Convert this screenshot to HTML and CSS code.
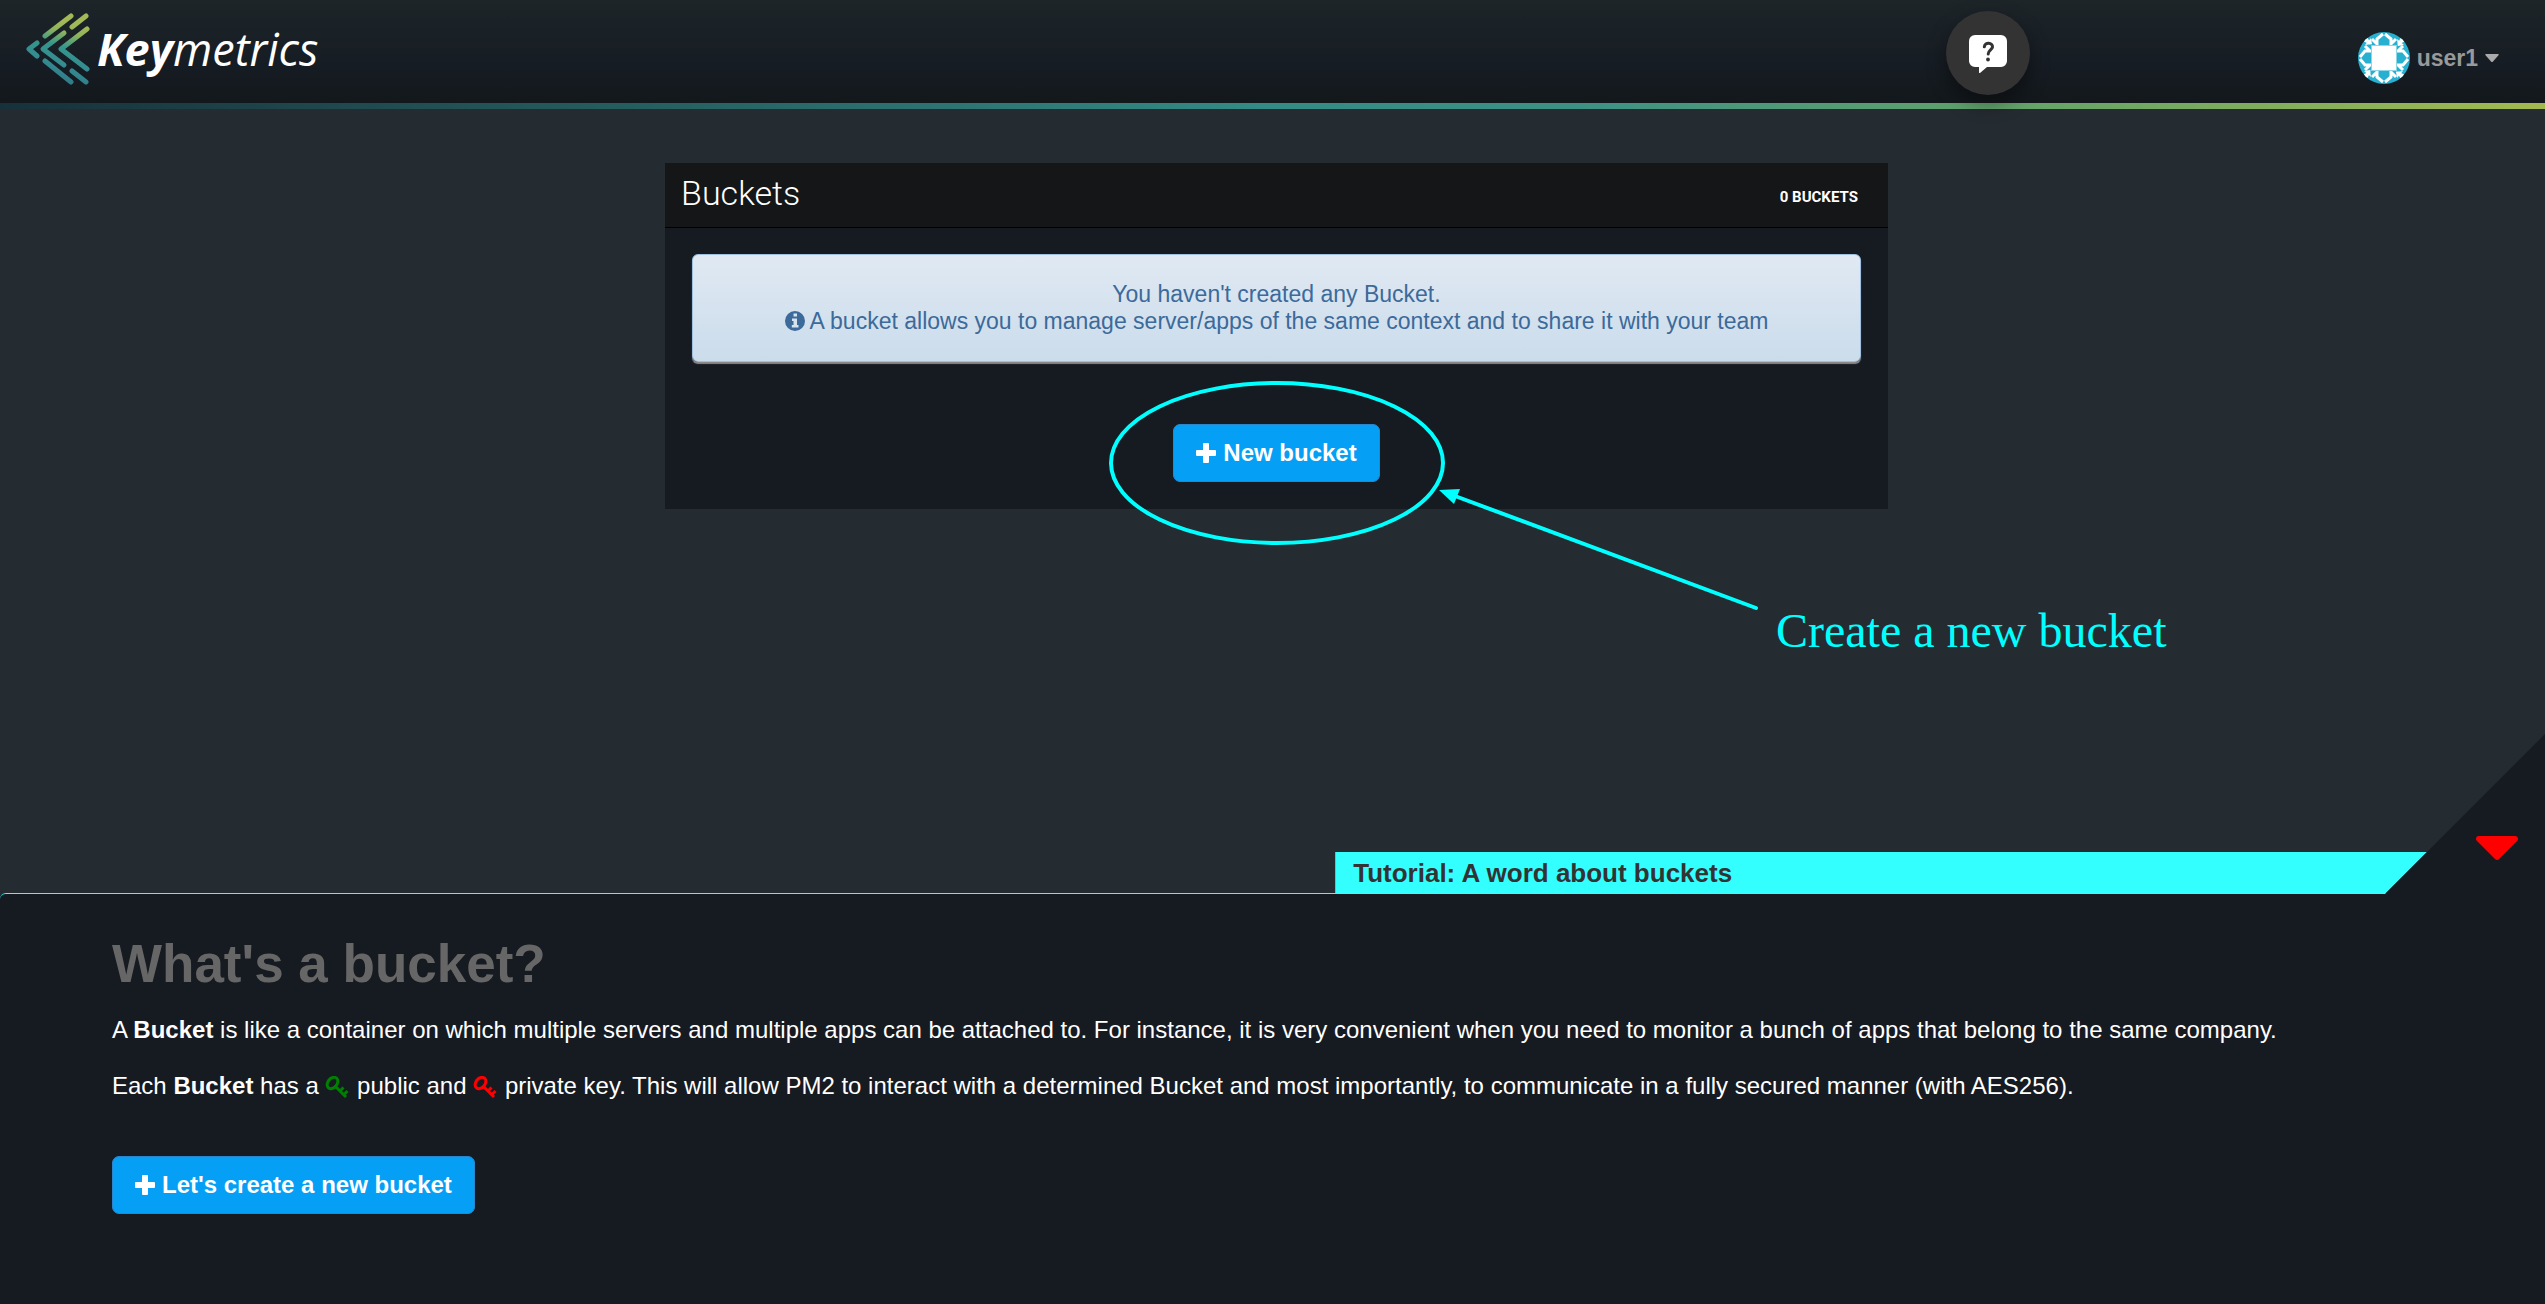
FILE: index.html
```html
<!DOCTYPE html>
<html lang="en">
<head>
  <meta charset="utf-8">
  <meta name="viewport" content="width=device-width, initial-scale=1">
  <title>Keymetrics - Buckets</title>
  <link rel="stylesheet" href="styles.css">
</head>
<body>
  <header class="topbar">
    <a class="brand" href="#">
      <svg class="brand-mark" viewBox="0 0 64 72" width="64" height="72" aria-hidden="true">
        <defs>
          <linearGradient id="mark" gradientUnits="userSpaceOnUse" x1="44" y1="0" x2="24" y2="72">
            <stop offset="0.12" stop-color="#a3b957"/>
            <stop offset="0.26" stop-color="#8fb45c"/>
            <stop offset="0.46" stop-color="#35968c"/>
            <stop offset="0.7" stop-color="#348b91"/>
            <stop offset="1" stop-color="#2f7484"/>
          </linearGradient>
        </defs>
        <g fill="none" stroke="url(#mark)" stroke-width="5" stroke-linecap="round" stroke-linejoin="round">
          <path d="M45 3 19 23"/>
          <path d="M60 3 46 14"/>
          <path d="M61 16 35 36 61 56"/>
          <path d="M38 20 17 36 38 52"/>
          <path d="M11 30 3 36 11 43"/>
          <path d="M19 48 45 69"/>
          <path d="M46 58 60 69"/>
        </g>
      </svg>
      <span class="brand-name"><b>Key</b>metrics</span>
    </a>
    <button class="help" type="button" aria-label="Help">
      <svg viewBox="0 0 38 38" width="38" height="38" aria-hidden="true">
        <path fill="#fff" d="M6 0h26a6 6 0 0 1 6 6v20a6 6 0 0 1-6 6H18l-7 6q-1 .5-1-1v-5H6a6 6 0 0 1-6-6V6a6 6 0 0 1 6-6z"/>
        <path fill="none" stroke="#333" stroke-width="3" stroke-linecap="round" d="M15.300 11.800c.4-5 8.700-4.300 8.200.2-.3 2.800-4.300 3.200-4.300 7"/>
        <circle cx="19" cy="24.500" r="1.900" fill="#333"/>
      </svg>
    </button>
    <button class="user-menu" type="button">
      <svg class="avatar" viewBox="0 0 52 52" width="52" height="52" aria-hidden="true">
        <clipPath id="round"><circle cx="26" cy="26" r="26"/></clipPath>
        <g clip-path="url(#round)">
          <path fill="#27b0cf" d="M0 0h52v52H0z"/>
          <g id="side">
            <path fill="#fff" d="M9 5l5 8-7-5zM45 7l-6 6 4-8zM14 12L7 13 13 6z"/>
            <path fill="none" stroke="#fff" stroke-width="3" d="M14 7l5 5V7l6-5M38 7l-5 5V7l-6-5"/>
          </g>
          <use href="#side" transform="rotate(90 26 26)"/>
          <use href="#side" transform="rotate(180 26 26)"/>
          <use href="#side" transform="rotate(270 26 26)"/>
          <path fill="#fff" stroke="#8ed5e6" d="M13.500 13.500h25v25h-25z"/>
        </g>
      </svg>
      <span>user1</span>
      <svg class="caret" viewBox="0 0 14 8" width="14" height="8" aria-hidden="true"><path fill="#aaa" d="M1 0h12q1 0 .7 1L8 7.500q-1 1-2 0L.3 1Q0 0 1 0z"/></svg>
    </button>
  </header>

  <main class="content">
    <section class="panel">
      <header class="panel-head">
        <h1>Buckets</h1>
        <span class="count">0 BUCKETS</span>
      </header>
      <div class="panel-body">
        <div class="alert">
          You haven't created any Bucket.<br>
          <svg class="info" viewBox="0 0 20 20" width="20" height="20" aria-hidden="true">
            <circle cx="10" cy="10" r="10" fill="#3c6a9a"/>
            <path fill="#d6e2ee" d="M8.500 2.500h3.500v3H8.500zM7 7.500h5v6.500h1.500V16.500H6.800V14h1.700v-4H7z"/>
          </svg>
          A bucket allows you to manage server/apps of the same context and to share it with your team
        </div>
        <div class="action">
          <button class="btn" type="button">
            <svg viewBox="0 0 20 20" width="20" height="20" aria-hidden="true"><path fill="#fff" d="M8 0h4q1 0 1 1v6h6q1 0 1 1v4q0 1-1 1h-6v6q0 1-1 1H8q-1 0-1-1v-6H1q-1 0-1-1V8q0-1 1-1h6V1q0-1 1-1z"/></svg>
            New bucket
          </button>
          <svg class="callout" viewBox="0 0 1080 290" width="1080" height="290">
            <ellipse cx="168" cy="82" rx="166" ry="80" fill="none" stroke="#0ff" stroke-width="4"/>
            <path d="M346 115 647 227" fill="none" stroke="#0ff" stroke-width="4" stroke-linecap="round"/>
            <path d="M330 109 351 108 345 123z" fill="#0ff"/>
            <text class="callout-text" x="667" y="266">Create a new bucket</text>
          </svg>
        </div>
      </div>
    </section>
  </main>

  <aside class="tutorial">
    <div class="tutorial-top">
      <h2 class="tutorial-title">Tutorial: A word about buckets</h2>
      <button class="corner" type="button" aria-label="Collapse tutorial">
        <svg viewBox="0 0 42 24" width="42" height="24" aria-hidden="true"><path fill="#f00" d="M3 0h36q3 0 3 3 0 1-1 2L23 23q-2 2-4 0L1 5Q0 4 0 3q0-3 3-3z"/></svg>
      </button>
    </div>
    <div class="tutorial-body">
      <h3>What's a bucket?</h3>
      <p>A <b>Bucket</b> is like a container on which multiple servers and multiple apps can be attached to. For instance, it is very convenient when you need to monitor a bunch of apps that belong to the same company.</p>
      <p>Each <b>Bucket</b> has a
        <svg class="key key-public" viewBox="0 0 24 22" width="24" height="22" aria-hidden="true"><g fill="none" stroke="currentColor" stroke-width="3"><ellipse cx="7.500" cy="7" rx="6.300" ry="4.600" transform="rotate(-50 7.500 7)"/><path d="M9.500 9.500 21 21M15 15l3.500-3.500M19 18.500l3.500-3.500"/></g></svg>
        public and
        <svg class="key key-private" viewBox="0 0 24 22" width="24" height="22" aria-hidden="true"><g fill="none" stroke="currentColor" stroke-width="3"><ellipse cx="7.500" cy="7" rx="6.300" ry="4.600" transform="rotate(-50 7.500 7)"/><path d="M9.500 9.500 21 21M15 15l3.500-3.500M19 18.500l3.500-3.500"/></g></svg>
        private key. This will allow PM2 to interact with a determined Bucket and most importantly, to communicate in a fully secured manner (with AES256).</p>
      <button class="btn" type="button">
        <svg viewBox="0 0 20 20" width="20" height="20" aria-hidden="true"><path fill="#fff" d="M8 0h4q1 0 1 1v6h6q1 0 1 1v4q0 1-1 1h-6v6q0 1-1 1H8q-1 0-1-1v-6H1q-1 0-1-1V8q0-1 1-1h6V1q0-1 1-1z"/></svg>
        Let's create a new bucket
      </button>
    </div>
  </aside>
</body>
</html>
```
FILE: styles.css
```css
* {
  box-sizing: border-box;
}

body {
  margin: 0;
  min-height: 100vh;
  display: flex;
  flex-direction: column;
  background: #242b31;
  color: #fff;
  font-family: "Liberation Sans", Arial, sans-serif;
}

h1, h2, h3, p {
  margin: 0;
}

button {
  border: 0;
  font: inherit;
  color: inherit;
  cursor: pointer;
}

/* Top bar */
.topbar {
  display: flex;
  align-items: flex-start;
  height: 109px;
  padding: 11px 46px 0 26px;
  background:
    linear-gradient(to right, #17313a, #348b85 50%, #3d9184 62%, #6aa666 82%, #a3b94e) bottom / 100% 6px no-repeat,
    linear-gradient(#1d2529, #161c23 60%, #12171a) #12171a;
}

.brand {
  display: flex;
  gap: 7px;
  color: #fff;
  text-decoration: none;
}

.brand-mark {
  margin-top: 2px;
}

.brand-name {
  font: italic 400 45px/76px "Open Sans", sans-serif;
}

.help {
  display: grid;
  place-items: center;
  width: 84px;
  height: 84px;
  margin-left: auto;
  margin-right: 328px;
  padding: 2px 0 0;
  border-radius: 50%;
  background: #333;
  box-shadow: 0 8px 20px rgba(0, 0, 0, 0.4);
}

.user-menu {
  display: flex;
  align-items: center;
  gap: 7px;
  margin-top: 21px;
  padding: 0;
  background: none;
  color: #999;
  font-size: 23px;
  font-weight: 700;
}

/* Buckets panel */
.content {
  padding: 54px 0 0 8px;
}

.panel {
  width: 48.2%;
  margin: 0 auto;
  background: #161a21;
}

.panel-head {
  display: flex;
  align-items: center;
  justify-content: space-between;
  height: 65px;
  padding: 0 30px 0 16px;
  background: #141617;
  border-bottom: 1px solid #000;
}

.panel-head h1 {
  padding-bottom: 4px;
  font: 300 34px/56px Roboto, sans-serif;
}

.count {
  padding-top: 4px;
  font: 700 15px/20px Roboto, sans-serif;
}

.panel-body {
  padding: 26px 27px 27px;
}

.alert {
  padding: 26px;
  border: 1px solid #9fbfdf;
  border-radius: 6px;
  background: linear-gradient(#e0e9f3, #cbdceb);
  box-shadow: 0 2px 1px rgba(190, 185, 180, 0.7);
  color: #3c6a9a;
  font-size: 23px;
  line-height: 27px;
  text-align: center;
}

.info {
  vertical-align: -2px;
}

.action {
  position: relative;
  width: max-content;
  margin: 62px auto 0;
}

.btn {
  display: flex;
  align-items: center;
  gap: 7px;
  height: 58px;
  padding: 0 22px;
  border: 1px solid #2a86cc;
  border-radius: 7px;
  background: #05a0f5;
  color: #fff;
  font-size: 24px;
  font-weight: 700;
}

.callout {
  position: absolute;
  left: -64px;
  top: -43px;
  pointer-events: none;
}

.callout-text {
  fill: #0ff;
  font: 48px "Liberation Serif", serif;
}

/* Tutorial drawer */
.tutorial {
  margin-top: auto;
}

.tutorial-top {
  display: flex;
  align-items: flex-end;
  justify-content: flex-end;
}

.tutorial-title {
  width: 42.9%;
  height: 42px;
  margin-right: -42px;
  padding-left: 18px;
  background: #3ff;
  clip-path: polygon(0 0, 100% 0, calc(100% - 42px) 100%, 0 100%);
  color: #333;
  font-size: 26px;
  line-height: 42px;
}

.corner {
  display: flex;
  justify-content: flex-end;
  width: 160px;
  height: 160px;
  padding: 102px 27px 0 0;
  background: #161a21;
  clip-path: polygon(100% 0, 100% 100%, 0 100%);
}

.tutorial-body {
  margin-top: -1px;
  padding: 38px 112px 90px;
  border-top: 1px solid #3ff;
  border-top-left-radius: 6px;
  background: #161a21;
  font-size: 24px;
  line-height: 28px;
}

.tutorial-body h3 {
  margin-bottom: 20px;
  color: #666;
  font-size: 53px;
  line-height: 64px;
}

.tutorial-body p {
  margin-bottom: 28px;
}

.tutorial-body .btn {
  margin-top: 56px;
}

.key {
  margin-right: 1px;
  vertical-align: -4px;
}

.key-public {
  color: #008000;
}

.key-private {
  color: #f00;
}
```
